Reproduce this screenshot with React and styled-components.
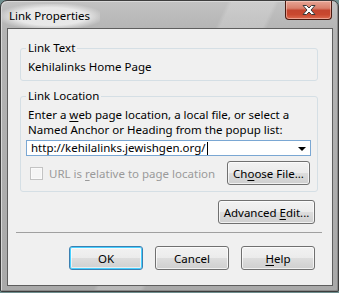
import React from "react";
import styled, { createGlobalStyle } from "styled-components";

const Global = createGlobalStyle`
  html, body { margin: 0; padding: 0; background: #6f8f8f; }
  body { width: 339px; height: 293px; overflow: hidden; }
  * { box-sizing: border-box; }
`;

const FONT = `"Noto Sans", "Open Sans", sans-serif`;

const Window = styled.div`
  width: 339px;
  height: 292px;
  border: 1px solid #3d3d3d;
  border-radius: 7px 7px 2px 2px;
  background:
    linear-gradient(115deg, rgba(255,255,255,0) 48%, rgba(255,255,255,0.18) 49%, rgba(255,255,255,0.18) 58%, rgba(255,255,255,0) 59%),
    linear-gradient(180deg, #c2c2c2 0%, #b4b4b4 30px, #a9a9a9 100%);
  box-shadow: inset 1px 1px 0 #d8d8d8, inset -1px -1px 0 #8a8a8a;
  display: flex;
  flex-direction: column;
  font-family: ${FONT};
  font-size: 11.5px;
  color: #000;
`;

const TitleBar = styled.div`
  height: 27px;
  display: flex;
  align-items: flex-start;
  justify-content: space-between;
  padding: 0 6px 0 1px;
`;

const Title = styled.div`
  margin-top: 3px;
  padding: 4px 10px 6px 7px;
  font-size: 11.5px;
  line-height: 15px;
  color: #000;
  white-space: nowrap;
  background: radial-gradient(ellipse at center, rgba(235,235,235,0.95) 50%, rgba(235,235,235,0) 78%);
`;

const CloseButton = styled.div`
  flex-shrink: 0;
  width: 47px;
  height: 19px;
  border: 1px solid #4b1a10;
  border-top: none;
  border-radius: 0 0 4px 4px;
  background: linear-gradient(180deg, #e7a595 0%, #d9806c 40%, #c4452f 52%, #c9482f 75%, #dc6a50 100%);
  box-shadow: inset 0 0 0 1px rgba(255,220,210,0.5);
  display: flex;
  align-items: center;
  justify-content: center;
`;

const Client = styled.div`
  margin: 0 5px 5px 6px;
  flex: 1;
  border: 1px solid #5e5e5e;
  background: #f0f0f0;
  padding: 11px 14px 0 12px;
  display: flex;
  flex-direction: column;
`;

const Group = styled.fieldset`
  margin: ${(p) => p.$top || 0}px 0 0 0;
  width: 298px;
  border: 1px solid #d5dfe5;
  border-radius: 3px;
  padding: 0 7px ${(p) => p.$bottom || 0}px 7px;
  min-width: 0;
`;

const Legend = styled.legend`
  padding: 0 2px;
  margin-left: -2px;
  line-height: 16px;
  font-size: 11.5px;
`;

const Value = styled.div`
  margin-top: 3px;
  line-height: 16px;
  white-space: nowrap;
`;

const Instructions = styled.div`
  margin-top: 3px;
  line-height: 15px;
  white-space: nowrap;
`;

const Combo = styled.div`
  margin: 3px -1px 0 -2px;
  height: 16px;
  border: 1px solid #7aa7d3;
  background: #fff;
  display: flex;
  align-items: center;
  padding: 0 4px 0 4px;
  line-height: 14px;
`;

const ComboText = styled.span`
  white-space: nowrap;
`;

const Caret = styled.span`
  display: inline-block;
  width: 1px;
  height: 13px;
  background: #000;
  margin-left: 1px;
`;

const Arrow = styled.span`
  margin-left: auto;
  width: 0;
  height: 0;
  border-left: 4px solid transparent;
  border-right: 4px solid transparent;
  border-top: 4px solid #000;
  margin-top: 2px;
`;

const OptionRow = styled.div`
  margin-top: 5px;
  height: 24px;
  display: flex;
  align-items: center;
`;

const Check = styled.span`
  flex-shrink: 0;
  width: 13px;
  height: 13px;
  margin-left: 2px;
  border: 1px solid #c3c3c3;
  background: #f5f5f5;
  box-shadow: inset 0 0 0 1px #fafafa;
`;

const CheckLabel = styled.span`
  margin-left: 6px;
  color: #9a9a9a;
  white-space: nowrap;
`;

const Button = styled.button`
  flex-shrink: 0;
  width: ${(p) => p.$w}px;
  height: 24px;
  margin: 0;
  padding: 0;
  font-family: ${FONT};
  font-size: 11.5px;
  color: #000;
  border: 1px solid ${(p) => (p.$default ? "#3c7fb1" : "#707070")};
  border-radius: 3px;
  background: linear-gradient(180deg, #f2f2f2 0%, #ebebeb 50%, #dddddd 51%, #cfcfcf 100%);
  box-shadow: ${(p) =>
    p.$default
      ? "inset 0 0 0 1px #48d0ff, inset 0 0 0 2px rgba(255,255,255,0.6)"
      : "inset 0 0 0 1px rgba(255,255,255,0.7)"};
  white-space: nowrap;
  ${(p) => (p.$push ? "margin-left: auto;" : "")}
`;

const U = styled.span`
  text-decoration: underline;
  text-underline-offset: 2px;
`;

const AdvancedRow = styled.div`
  margin-top: 8px;
  display: flex;
  justify-content: flex-end;
  padding-right: 3px;
`;

const Separator = styled.div`
  margin: 8px -4px 0 -4px;
  height: 1px;
  background: #a0a0a0;
`;

const ButtonRow = styled.div`
  margin-top: 13px;
  display: flex;
  justify-content: flex-end;
  gap: 12px;
  padding-right: 3px;
`;

function CloseX() {
  return (
    <svg width="14" height="10" viewBox="0 0 14 10">
      <path
        d="M1 0.5 H4.5 L7 3 L9.5 0.5 H13 L9 5 L13 9.5 H9.5 L7 7 L4.5 9.5 H1 L5 5 Z"
        fill="#ffffff"
        stroke="#3a3a3a"
        strokeWidth="1"
        strokeLinejoin="round"
      />
    </svg>
  );
}

export default function App() {
  return (
    <>
      <Global />
      <Window>
        <TitleBar>
          <Title>Link Properties</Title>
          <CloseButton>
            <CloseX />
          </CloseButton>
        </TitleBar>
        <Client>
          <Group $bottom={5}>
            <Legend>Link Text</Legend>
            <Value>Kehilalinks Home Page</Value>
          </Group>
          <Group $top={7} $bottom={6}>
            <Legend>Link Location</Legend>
            <Instructions>
              Enter a <U>w</U>eb page location, a local file, or select a
              <br />
              Named Anchor or Heading from the popup list:
            </Instructions>
            <Combo>
              <ComboText>http://kehilalinks.jewishgen.org/</ComboText>
              <Caret />
              <Arrow />
            </Combo>
            <OptionRow>
              <Check />
              <CheckLabel>
                URL is <U>r</U>elative to page location
              </CheckLabel>
              <Button $w={83} $push>
                Ch<U>o</U>ose File...
              </Button>
            </OptionRow>
          </Group>
          <AdvancedRow>
            <Button $w={97}>
              Advanced <U>E</U>dit...
            </Button>
          </AdvancedRow>
          <Separator />
          <ButtonRow>
            <Button $w={74} $default>
              OK
            </Button>
            <Button $w={74}>Cancel</Button>
            <Button $w={74}>
              <U>H</U>elp
            </Button>
          </ButtonRow>
        </Client>
      </Window>
    </>
  );
}
